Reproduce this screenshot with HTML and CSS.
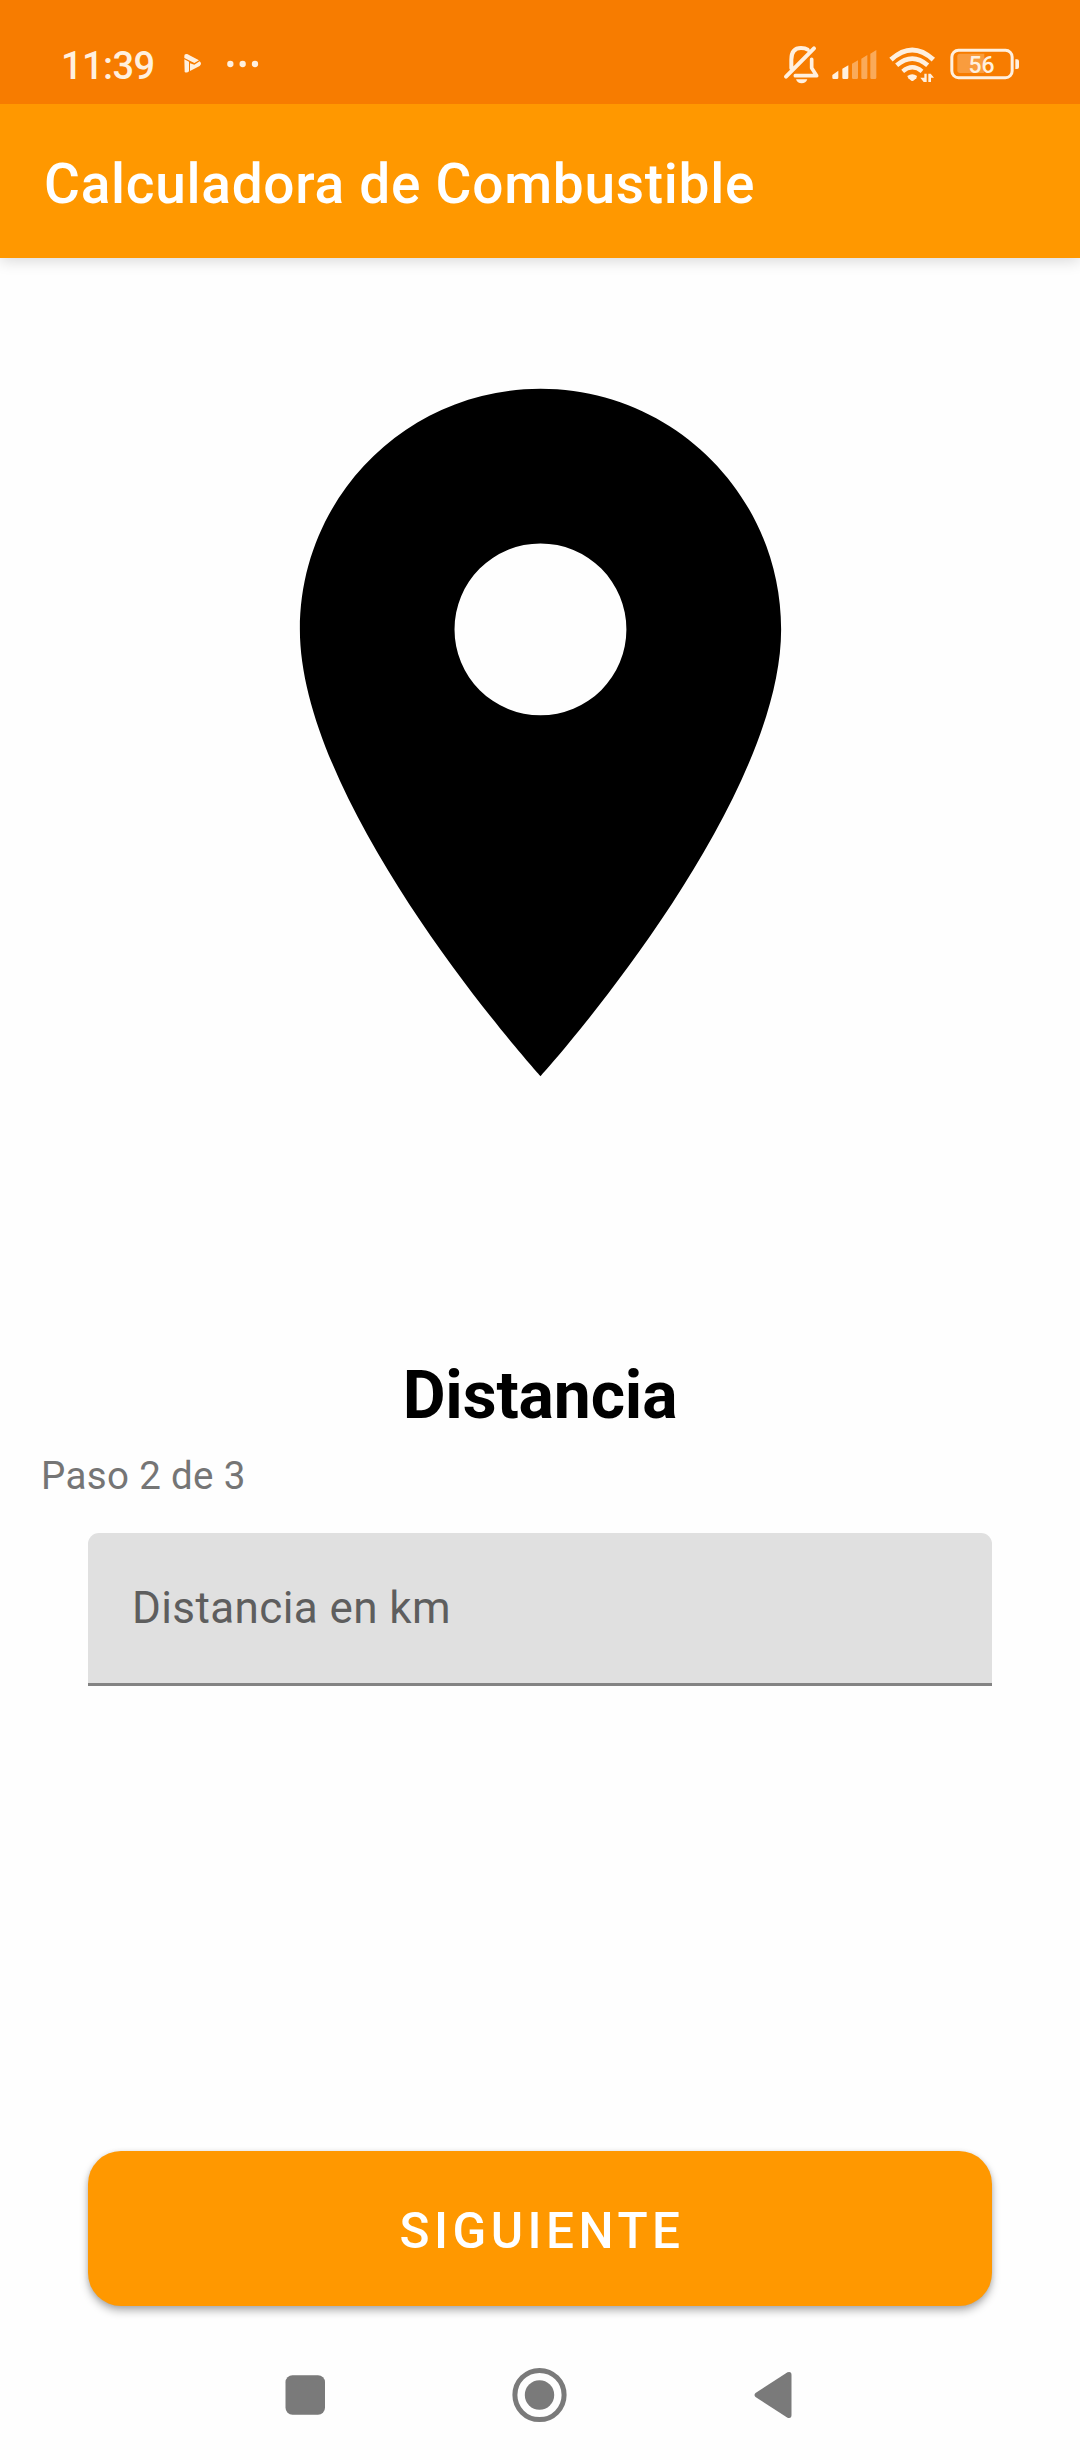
FILE: index.html
```html
<!DOCTYPE html>
<html lang="es">
<head>
<meta charset="utf-8">
<title>Calculadora de Combustible</title>
<link rel="stylesheet" href="styles.css">
</head>
<body>
<div class="screen">
  <header class="status">
    <div class="status-left">
      <span class="clock">11:39</span>
      <svg class="play" width="20" height="40" viewBox="549 135 60 120">
        <path d="M556 163Q562 161 567 165L597 181L583 189L553 174V168Q553 164 556 163ZM553 178L567 185V214Q561 220 554 216Z M570 190L583 194L599 184Q607 191 599 198L570 213Z"/>
      </svg>
      <svg class="dots" width="34" height="40" viewBox="677 135 102 120">
        <circle cx="690" cy="192" r="9.5"/><circle cx="727" cy="192" r="9.5"/><circle cx="764" cy="192" r="9.5"/>
      </svg>
    </div>
    <div class="status-right">
      <svg width="37" height="40" viewBox="129 75 111 120">
        <path class="line" stroke-width="12" d="M154 145V119Q154 84 183 84Q196 84 203 89M138 170L222 85"/>
        <path class="line" stroke-width="11" d="M215 118V144L230 167H166"/>
        <path d="M168 178H202Q198 190 185 190Q172 190 168 178Z"/>
      </svg>
      <svg class="signal" width="45" height="40" viewBox="275 75 135 120">
        <path d="M276 165L294 152V173Q294 177 290 177H280Q276 177 276 173ZM306 146L324 136V173Q324 177 320 177H310Q306 177 306 173Z"/>
        <path class="dim" d="M335 131L353 121V173Q353 177 349 177H339Q335 177 335 173ZM363 116L381 105V173Q381 177 377 177H367Q363 177 363 173ZM390 101L408 90V173Q408 177 404 177H394Q390 177 390 173Z"/>
      </svg>
      <svg class="wifi" width="47" height="40" viewBox="446 75 141 120">
        <path class="line flat" stroke-width="15" d="M452 119Q516 61 579 119"/>
        <path class="line flat" stroke-width="14" d="M469 136Q516 96 562 136"/>
        <path class="line flat" stroke-width="13" d="M487 154Q516 130 545 154"/>
        <path d="M501 168Q516 157 530 168L528 175L519 182Q516 184 513 182L504 175Z"/>
        <path d="M552 161H559V186H550L540 173H552ZM564 186V161H571L581 173H572V186Z"/>
      </svg>
      <svg class="battery" width="70" height="40" viewBox="629 75 210 120">
        <rect class="line" stroke-width="9" x="634.5" y="91" width="181" height="82" rx="20"/>
        <path class="level" d="M659 101H732V159H659Q651 159 651 151V109Q651 101 659 101Z"/>
        <path d="M825 118H830Q836 118 836 124V141Q836 147 830 147H825Z"/>
        <text x="723.5" y="159" text-anchor="middle">56</text>
      </svg>
    </div>
  </header>
  <div class="appbar"><h1>Calculadora de Combustible</h1></div>
  <main class="content">
    <svg class="pin" viewBox="0 0 24 24"><path d="M12 2C8.13 2 5 5.13 5 9c0 5.25 7 13 7 13s7-7.75 7-13c0-3.87-3.13-7-7-7zm0 9.5a2.5 2.5 0 1 1 0-5 2.5 2.5 0 0 1 0 5z"/></svg>
    <h2>Distancia</h2>
    <p class="step">Paso 2 de 3</p>
    <div class="field">Distancia en km</div>
    <button class="next" type="button">SIGUIENTE</button>
  </main>
  <nav class="navbar">
    <svg width="40" height="56" viewBox="0 0 40 56"><rect x=".5" y="8.2" width="39.5" height="39.5" rx="7"/></svg>
    <svg width="56" height="56" viewBox="0 0 56 56"><circle class="ring" cx="27.5" cy="28" r="24.6"/><circle cx="27.5" cy="28" r="14.7"/></svg>
    <svg width="38" height="56" viewBox="0 0 38 56"><path d="M1.5 26L33.5 5.3Q37.5 4 37.5 8V48Q37.5 52 33.5 50.7L1.5 30Q-.5 28 1.5 26Z"/></svg>
  </nav>
</div>
</body>
</html>
```
FILE: styles.css
```css
* { box-sizing: border-box; }
body, h1, h2, p { margin: 0; }
body { background: #fefefe; font-family: Roboto, sans-serif; }
svg { display: block; flex: none; }

.screen {
  width: 1080px;
  height: 2460px;
  display: flex;
  flex-direction: column;
  overflow: hidden;
}

.status {
  position: relative;
  z-index: 1;
  height: 104px;
  padding: 45px 60px 0 61px;
  display: flex;
  justify-content: space-between;
  background: #f77c00;
  color: #fff0df;
  fill: #fff0df;
}
.status-left, .status-right { display: flex; height: 40px; }
.clock { width: 122px; font-size: 38px; line-height: 42px; font-weight: 500; letter-spacing: -.6px; }
.dots { margin-left: 23px; }
.signal { margin-left: 11.7px; }
.wifi { margin-left: 12px; }
.battery { margin-left: 14px; }
.battery text { font-size: 69px; font-weight: 500; }
.line { fill: none; stroke: #fff0df; stroke-linecap: round; stroke-linejoin: round; }
.flat { stroke-linecap: butt; }
.dim { opacity: .4; }
.level { opacity: .28; }

.appbar {
  height: 154px;
  padding-left: 44px;
  display: flex;
  align-items: center;
  background: #ff9800;
  box-shadow: 0 3px 14px rgba(0, 0, 0, .15);
}
.appbar h1 { padding-top: 6px; color: #fff; font-size: 55px; line-height: 64px; font-weight: 500; letter-spacing: .73px; }

.content {
  flex: 1;
  display: flex;
  flex-direction: column;
  padding: 61.5px 88px 0;
}
.pin { width: 825px; height: 825px; align-self: center; }
h2 { margin-top: 212.5px; text-align: center; font-size: 66px; line-height: 77px; font-weight: 700; letter-spacing: -.15px; color: #000; }
.step { margin: 19px 0 0 -47px; font-size: 38.5px; line-height: 45px; letter-spacing: .35px; color: #757575; }
.field {
  height: 153px;
  margin-top: 35px;
  padding: 0 44px;
  display: flex;
  align-items: center;
  background: #e0e0e0;
  border-bottom: 3px solid #838383;
  border-radius: 11px 11px 0 0;
  font-size: 44px;
  letter-spacing: .4px;
  color: #5e5e5e;
}
.next {
  height: 155px;
  margin-top: 465px;
  padding: 4px 0 0 4px;
  border: 0;
  border-radius: 33px;
  background: #ff9800;
  box-shadow: 0 5px 8px rgba(0, 0, 0, .28), 0 1px 5px rgba(0, 0, 0, .12);
  color: #fff;
  font: 500 49.5px/58px Roboto, sans-serif;
  letter-spacing: .091em;
}

.navbar {
  height: 130px;
  padding: 37px 288px 0 285px;
  display: flex;
  justify-content: space-between;
  fill: #7a7a7a;
}
.ring { fill: none; stroke: #7a7a7a; stroke-width: 5; }
```
